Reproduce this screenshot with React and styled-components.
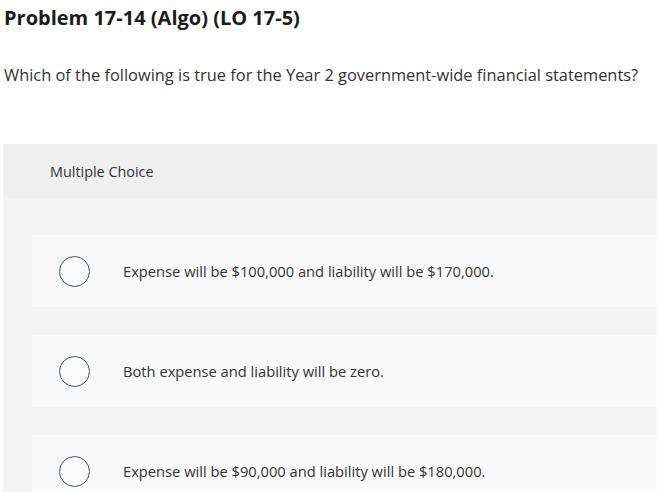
import styled, { createGlobalStyle } from 'styled-components';

const GlobalStyle = createGlobalStyle`
  body {
    margin: 0;
    background: #ffffff;
    font-family: "Open Sans", Lato, sans-serif;
  }
`;

const choices = [
  'Expense will be $100,000 and liability will be $170,000.',
  'Both expense and liability will be zero.',
  'Expense will be $90,000 and liability will be $180,000.',
];

export default function App() {
  return (
    <Page>
      <GlobalStyle />
      <Title>Problem 17-14 (Algo) (LO 17-5)</Title>
      <Question>
        Which of the following is true for the Year 2 government-wide financial statements?
      </Question>
      <Panel>
        <PanelHeader>Multiple Choice</PanelHeader>
        <ChoiceList>
          {choices.map((text) => (
            <Choice key={text}>
              <Radio />
              <ChoiceText>{text}</ChoiceText>
            </Choice>
          ))}
        </ChoiceList>
      </Panel>
    </Page>
  );
}

const Page = styled.div`
  width: 658px;
  height: 492px;
  overflow: hidden;
`;

const Title = styled.h1`
  margin: 0;
  padding: 6px 0 0 4px;
  font-size: 20px;
  line-height: 24px;
  font-weight: 700;
  color: #1c1c1c;
  white-space: nowrap;
`;

const Question = styled.p`
  margin: 0;
  padding: 34px 0 0 4px;
  font-size: 16.4px;
  line-height: 22px;
  color: #333333;
  white-space: nowrap;
`;

const Panel = styled.section`
  margin: 58px 0 0 3px;
  width: 654px;
  background: #f3f3f3;
`;

const PanelHeader = styled.div`
  height: 54px;
  display: flex;
  align-items: center;
  padding-left: 47px;
  background: #efefef;
  font-size: 14.4px;
  color: #333333;
`;

const ChoiceList = styled.div`
  display: flex;
  flex-direction: column;
  gap: 28px;
  padding: 37px 0 20px 29px;
`;

const Choice = styled.div`
  height: 72px;
  display: flex;
  align-items: center;
  background: #fafafa;
`;

const Radio = styled.span`
  box-sizing: border-box;
  width: 31px;
  height: 31px;
  margin-left: 27px;
  border: 1.2px solid #3b5166;
  border-radius: 50%;
  background: #fcfcfc;
  flex-shrink: 0;
`;

const ChoiceText = styled.span`
  margin-left: 33px;
  font-size: 14.7px;
  color: #333333;
  white-space: nowrap;
`;
